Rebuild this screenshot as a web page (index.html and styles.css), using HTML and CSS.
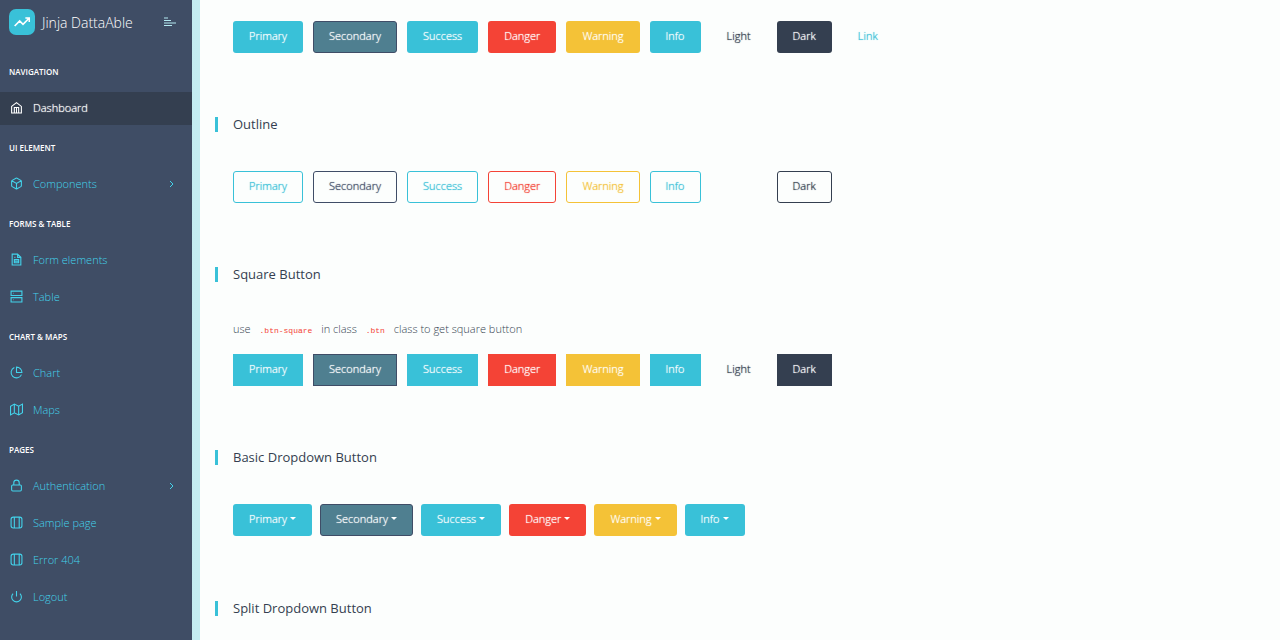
FILE: index.html
```html
<!DOCTYPE html>
<html lang="en">
<head>
<meta charset="utf-8">
<title>Jinja DattaAble - Buttons</title>
<link rel="stylesheet" href="styles.css">
</head>
<body>
<div class="layout">
  <aside class="sidebar">
    <header class="brand">
      <a class="brand-link" href="#">
        <span class="brand-mark"><svg viewBox="0 0 24 24" width="16" height="16"><path d="M23 6l-9.500 9.500-5-5L1 18M17 6h6v6"/></svg></span>
        <span>Jinja DattaAble</span>
      </a>
      <button class="menu-toggle" type="button" aria-label="Toggle menu"><svg viewBox="0 0 14 10" width="14" height="10"><path d="M1 1h4M1 3.500h7M1 6h12M1 8.500h8"/></svg></button>
    </header>
    <nav class="menu">
      <h2 class="caption">Navigation</h2>
      <a class="item active" href="#"><svg class="icon" viewBox="0 0 24 24"><path d="M3 10l9-7 9 7v12H3zM8 22V12h8v10M12 12v10"/></svg>Dashboard</a>
      <h2 class="caption">UI Element</h2>
      <a class="item" href="#"><svg class="icon" viewBox="0 0 24 24"><path d="M21 16V8a2 2 0 0 0-1-1.730l-7-4a2 2 0 0 0-2 0l-7 4A2 2 0 0 0 3 8v8a2 2 0 0 0 1 1.730l7 4a2 2 0 0 0 2 0l7-4A2 2 0 0 0 21 16zM3.300 7L12 12l8.700-5M12 22V12"/></svg>Components<svg class="arrow" viewBox="0 0 6 8"><path d="M1 1l3 3-3 3"/></svg></a>
      <h2 class="caption">Forms &amp; Table</h2>
      <a class="item" href="#"><svg class="icon" viewBox="0 0 24 24"><path d="M14 2H4v20h16V8zM14 2v6h6M8 12h8v6H8zM8 15h8M8 8h2"/></svg>Form elements</a>
      <a class="item" href="#"><svg class="icon" viewBox="0 0 24 24"><path d="M2 2h20v8H2zM2 14h20v8H2zM6 6h1M6 18h1"/></svg>Table</a>
      <h2 class="caption">Chart &amp; Maps</h2>
      <a class="item" href="#"><svg class="icon" viewBox="0 0 24 24"><path d="M21.200 15.900A10 10 0 1 1 8 2.800M22 12A10 10 0 0 0 12 2v10z"/></svg>Chart</a>
      <a class="item" href="#"><svg class="icon" viewBox="0 0 24 24"><path d="M1 6v16l7-4 8 4 7-4V2l-7 4-8-4zM8 2v16M16 6v16"/></svg>Maps</a>
      <h2 class="caption">Pages</h2>
      <a class="item" href="#"><svg class="icon" viewBox="0 0 24 24"><path d="M5 11h14a2 2 0 0 1 2 2v7a2 2 0 0 1-2 2H5a2 2 0 0 1-2-2v-7a2 2 0 0 1 2-2zM7 11V7a5 5 0 0 1 10 0v4"/></svg>Authentication<svg class="arrow" viewBox="0 0 6 8"><path d="M1 1l3 3-3 3"/></svg></a>
      <a class="item" href="#"><svg class="icon" viewBox="0 0 24 24"><rect x="2" y="2" width="20" height="20" rx="4"/><path d="M8 2v20M17 2v20"/></svg>Sample page</a>
      <a class="item" href="#"><svg class="icon" viewBox="0 0 24 24"><rect x="2" y="2" width="20" height="20" rx="4"/><path d="M8 2v20M17 2v20"/></svg>Error 404</a>
      <a class="item" href="#"><svg class="icon" viewBox="0 0 24 24"><path d="M18.400 6.600a9 9 0 1 1-12.700 0M12 2v10"/></svg>Logout</a>
    </nav>
  </aside>
  <main class="content">
    <section class="card">
      <div class="buttons">
        <button type="button" class="btn primary">Primary</button>
        <button type="button" class="btn secondary">Secondary</button>
        <button type="button" class="btn primary">Success</button>
        <button type="button" class="btn danger">Danger</button>
        <button type="button" class="btn warning">Warning</button>
        <button type="button" class="btn primary">Info</button>
        <button type="button" class="btn light">Light</button>
        <button type="button" class="btn dark">Dark</button>
        <button type="button" class="btn link">Link</button>
      </div>
    </section>
    <section class="card">
      <h5 class="title">Outline</h5>
      <div class="buttons">
        <button type="button" class="btn outline-primary">Primary</button>
        <button type="button" class="btn outline-secondary">Secondary</button>
        <button type="button" class="btn outline-primary">Success</button>
        <button type="button" class="btn outline-danger">Danger</button>
        <button type="button" class="btn outline-warning">Warning</button>
        <button type="button" class="btn outline-primary">Info</button>
        <button type="button" class="btn outline-light">Light</button>
        <button type="button" class="btn outline-dark">Dark</button>
      </div>
    </section>
    <section class="card">
      <h5 class="title">Square Button</h5>
      <p class="note">use <code>.btn-square</code> in class <code>.btn</code> class to get square button</p>
      <div class="buttons square">
        <button type="button" class="btn primary">Primary</button>
        <button type="button" class="btn secondary">Secondary</button>
        <button type="button" class="btn primary">Success</button>
        <button type="button" class="btn danger">Danger</button>
        <button type="button" class="btn warning">Warning</button>
        <button type="button" class="btn primary">Info</button>
        <button type="button" class="btn light">Light</button>
        <button type="button" class="btn dark">Dark</button>
      </div>
    </section>
    <section class="card">
      <h5 class="title">Basic Dropdown Button</h5>
      <div class="buttons dropdowns">
        <button type="button" class="btn primary caret">Primary</button>
        <button type="button" class="btn secondary caret">Secondary</button>
        <button type="button" class="btn primary caret">Success</button>
        <button type="button" class="btn danger caret">Danger</button>
        <button type="button" class="btn warning caret">Warning</button>
        <button type="button" class="btn primary caret">Info</button>
      </div>
    </section>
    <section class="card">
      <h5 class="title">Split Dropdown Button</h5>
    </section>
  </main>
</div>
</body>
</html>
```
FILE: styles.css
```css
* { box-sizing: border-box; }
body {
  margin: 0;
  background: #fcfefd;
  color: #343f50;
  font-family: "Open Sans", sans-serif;
  font-size: 11px;
}
a { text-decoration: none; }
svg { fill: none; stroke: currentColor; }
.layout { display: flex; min-height: 100vh; }

.sidebar {
  flex: none;
  width: 200px;
  border-right: 8px solid;
  border-image: linear-gradient(to right, #6fb4bd, #c4edf2) 1;
  background: #3f4d65;
  background-clip: padding-box;
  color: #39c1d8;
}
.brand {
  display: flex;
  align-items: center;
  justify-content: space-between;
  height: 44px;
  margin-bottom: 7px;
  padding: 0 15px 0 9px;
}
.brand-link {
  display: flex;
  align-items: center;
  gap: 7px;
  color: #fff;
  font-size: 14px;
  font-weight: 300;
}
.brand-mark {
  display: grid;
  place-items: center;
  width: 26px;
  height: 26px;
  border-radius: 7px;
  background: #39c1d8;
  stroke-width: 2.5;
}
.menu-toggle {
  display: flex;
  padding: 0;
  border: 0;
  background: none;
  color: #b4eaf2;
}
.menu { display: flex; flex-direction: column; }
.caption {
  height: 39px;
  margin: 0;
  padding: 3px 9px 0;
  color: #fff;
  font-size: 8px;
  font-weight: 600;
  line-height: 36px;
  text-transform: uppercase;
}
.item {
  display: flex;
  align-items: center;
  height: 33px;
  margin: 2px 0;
  padding: 0 17px 2px 10px;
  color: #43d3eb;
  font-weight: 300;
  line-height: 30px;
}
.item.active {
  background: #343f50;
  color: #fff;
  text-shadow: 0 0 1px currentColor;
}
.icon {
  width: 13px;
  height: 13px;
  margin-right: 10px;
  stroke-width: 2;
}
.arrow { width: 6px; height: 8px; margin-left: auto; }

.content { flex: 1; padding: 21px 15px 0; }
.card { padding: 0 18px; margin-bottom: 64px; }
.card:last-child { margin-bottom: 0; }
.title {
  margin: 0 0 39px -18px;
  padding-left: 15px;
  border-left: 3px solid #39c1d8;
  font-size: 13px;
  font-weight: 400;
  line-height: 15px;
}
.card:last-child .title { margin-bottom: 0; }
.note { margin: 0 0 15px; font-weight: 300; line-height: 16px; }
.note code {
  margin: 0 6px;
  color: #f44336;
  font-family: "Liberation Mono", monospace;
  font-size: 8px;
}
.buttons { display: flex; flex-wrap: wrap; gap: 10px; }
.dropdowns { gap: 8px; padding-bottom: 1px; }
.btn {
  height: 32px;
  padding: 0 15px 2px;
  border: 1px solid transparent;
  border-radius: 3px;
  background: transparent;
  color: #fff;
  font: 300 11px/16px "Open Sans", sans-serif;
  text-shadow: 0 0 1px currentColor;
}
.square .btn { border-radius: 0; }
.primary { background: #39c1d8; }
.secondary { background: #4f7f90; border-color: #3f4d67; }
.danger { background: #f44336; }
.warning { background: #f4c237; }
.light { color: #343f50; }
.dark { background: #343f50; }
.link { color: #39c1d8; }
.outline-primary { border-color: #39c1d8; color: #39c1d8; }
.outline-secondary { border-color: #3f4d67; color: #3f4d67; }
.outline-danger { border-color: #f44336; color: #f44336; }
.outline-warning { border-color: #f4c237; color: #f4c237; }
.outline-light { color: #fcfefd; }
.outline-dark { border-color: #343f50; color: #343f50; }
.caret::after {
  content: "";
  display: inline-block;
  margin-left: 3px;
  border: 3px solid transparent;
  border-top-color: currentColor;
  border-bottom: 0;
  vertical-align: 3px;
}
```
